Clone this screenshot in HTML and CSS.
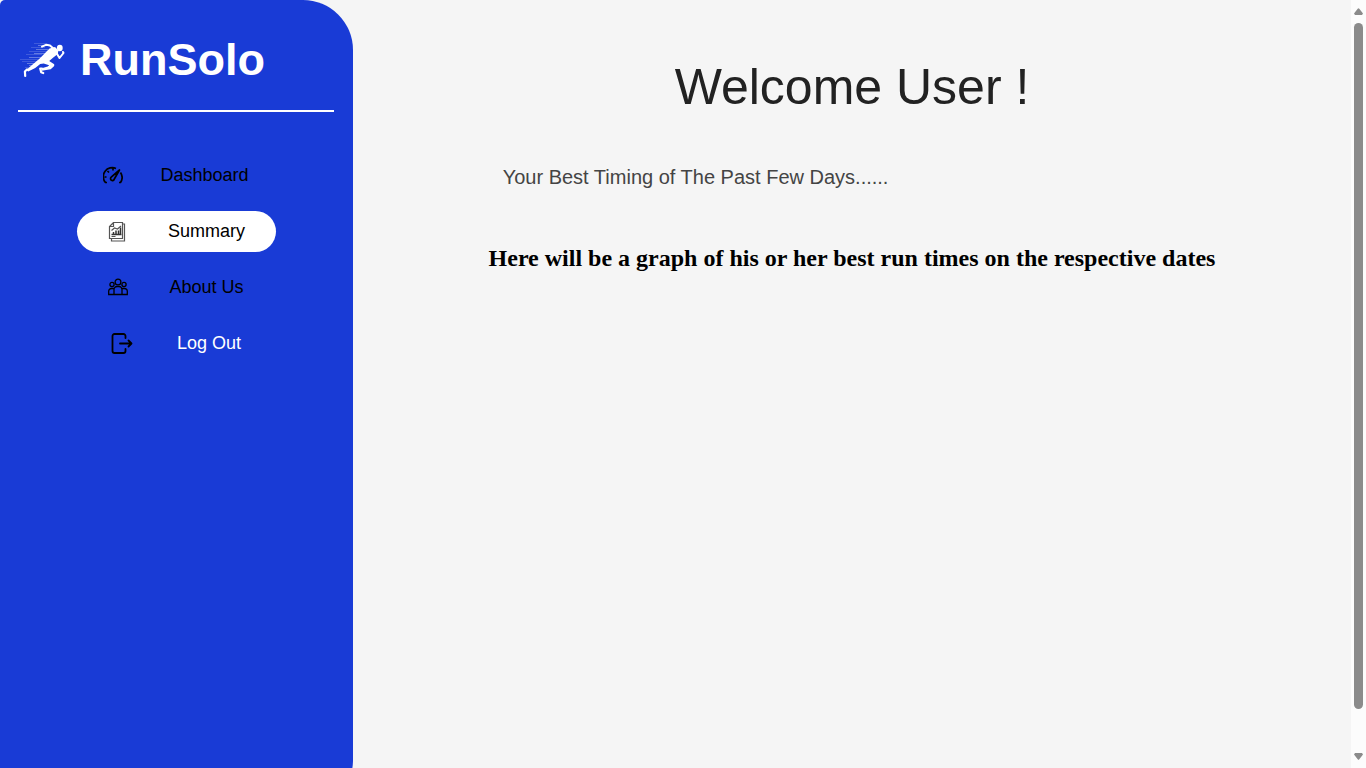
FILE: index.html
```html
<!DOCTYPE html>
<html lang="en">
<head>
<meta charset="utf-8">
<title>RunSolo - Summary</title>
<link rel="stylesheet" href="styles.css">
</head>
<body>
<div class="page">
  <aside class="sidebar">
    <div class="brand">
      <svg class="brand-logo" viewBox="0 0 48 38" aria-hidden="true">
        <g stroke="#fff" stroke-width=".8">
          <path opacity=".2" d="M14 2.500h12M11 6.500h14M9 10.500h18M6 13.500h16M0 18.500h18M2 20.500h16M5 26.500h6"/>
          <path opacity=".4" d="M18 4.500h7M16 8.500h12M14 12.500h12M9 16.500h13M7 22.500h10M9 24.500h6"/>
        </g>
        <g fill="none" stroke="#fff" stroke-linecap="round" stroke-linejoin="round">
          <path d="M34 8l-4-3.500-3.500-.8-4.500 2" stroke-width="2"/>
          <path d="M36.500 12l3 5 4-5-.5-1" stroke-width="2"/>
          <path d="M22 27.500h-1.800l1 3.800 2 .8" stroke-width="2.200"/>
          <path d="M7 28.500l-2.100 2 .3 4.500" stroke-width="2.200"/>
        </g>
        <path d="M29.500 7.500l5.500-1.500 3.500 3.500-.8 3.500-5 4-3.500 3 5 3.200v1.800l-3.500 3.300-9 1.500v-2.500l6-1.800 1.500-1.300-5.500-1.800-3.500.5-5 4-7 3.500-2-1.500 7-6 6.500-5.500z" fill="#fff"/>
        <ellipse cx="39.800" cy="7" rx="2.900" ry="3.200" fill="#fff"/>
      </svg>
      <span class="brand-name">RunSolo</span>
    </div>
    <nav class="menu">
      <a class="menu-link" href="#dashboard">
        <svg class="icon" viewBox="0 0 20 20" aria-hidden="true">
          <path d="M4 16.500H2.500A9 9 0 0 1 13 2.400M17.500 6.500a9 9 0 0 1 0 10H16M10 2v2.500M4.500 5l1.500 1.500M1.500 11H3.500" fill="none" stroke="currentColor" stroke-width="1.700"/>
          <path d="M8.200 11.200L16.500 4l-5.200 9a1.900 1.900 0 1 1-3.100-1.800z" fill="none" stroke="currentColor" stroke-width="1.700" stroke-linejoin="round"/>
        </svg>
        <span>Dashboard</span>
      </a>
      <a class="menu-link menu-link-medium menu-link-active" href="#summary" aria-current="page">
        <svg class="icon" viewBox="0 0 20 20" aria-hidden="true">
          <path d="M6.500.5h9v16H2.500V4.500zM6.500.5v4h-4M15.500 2h2v17H4.500v-2" fill="none" stroke="#555" stroke-width="1.200"/>
          <path d="M4.500 12.500h10M6.500 12v-2M9 12V8.500M11.500 12V8.500M13.500 12V5.500" fill="none" stroke="#333" stroke-width="1.500"/>
          <path d="M4.500 8.500l3-2.500 3 1 3.500-3M4.500 14.500h4" fill="none" stroke="#555" stroke-width="1.200"/>
        </svg>
        <span>Summary</span>
      </a>
      <a class="menu-link menu-link-medium" href="#about">
        <svg class="icon" viewBox="0 0 20 20" aria-hidden="true">
          <g fill="none" stroke="currentColor" stroke-width="1.300">
            <circle cx="10" cy="4" r="2.900"/>
            <circle cx="4" cy="6.500" r="2.100"/>
            <circle cx="16" cy="6.500" r="2.100"/>
            <path d="M6 16.500V11.500a3 3 0 0 1 3-3h2a3 3 0 0 1 3 3v5M6 10.500H3.500A2.800 2.800 0 0 0 .7 13.300v3.200h18.600v-3.200A2.800 2.800 0 0 0 16.500 10.500H14"/>
          </g>
        </svg>
        <span>About Us</span>
      </a>
      <a class="menu-link menu-link-wide menu-link-light" href="#logout">
        <svg class="icon icon-logout" viewBox="0 0 22 22" aria-hidden="true">
          <path d="M14.500 5V3a2 2 0 0 0-2-2H3.500A2 2 0 0 0 1.500 3v15A2 2 0 0 0 3.500 20h9a2 2 0 0 0 2-2v-2M9 10.500h11M17.500 7.500l3 3-3 3" fill="none" stroke="#000" stroke-width="1.800" stroke-linecap="round" stroke-linejoin="round"/>
        </svg>
        <span>Log Out</span>
      </a>
    </nav>
  </aside>
  <main class="content">
    <h1 class="welcome">Welcome User !</h1>
    <p class="subtitle">Your Best Timing of The Past Few Days......</p>
    <h2 class="graph-note">Here will be a graph of his or her best run times on the respective dates</h2>
  </main>
  <div class="scrollbar" aria-hidden="true">
    <svg class="scroll-arrow" viewBox="0 0 9 7"><path d="M3.700.7a1 1 0 0 1 1.600 0L9 5.500 8 7H1L0 5.500z"/></svg>
    <div class="scroll-track"><div class="scroll-thumb"></div></div>
    <svg class="scroll-arrow" viewBox="0 0 9 7"><path d="M3.700 6.300a1 1 0 0 0 1.600 0L9 1.500 8 0H1L0 1.500z"/></svg>
  </div>
</div>
</body>
</html>
```
FILE: styles.css
```css
* {
  box-sizing: border-box;
}

body {
  margin: 0;
  background: #f5f5f5;
  font-family: "Liberation Sans", Arial, sans-serif;
}

.page {
  display: flex;
  height: 100vh;
  overflow: hidden;
}

/* The sidebar runs on below the fold, where its lower corner curves. */
.sidebar {
  flex: 0 0 353px;
  height: calc(100vh + 42px);
  padding: 0 19px 0 18px;
  background: #193bd6;
  border-radius: 5px 50px 50px 5px;
}

.brand {
  display: flex;
  align-items: center;
  gap: 12px;
  height: 112px;
  padding-bottom: 8px;
  padding-top: 18px;
  border-bottom: 2px solid #fff;
}

.brand-logo {
  width: 48px;
  height: 38px;
  margin-left: 2px;
}

.brand-name {
  color: #fff;
  font-size: 45px;
  font-weight: bold;
  line-height: 50px;
}

.menu {
  display: flex;
  flex-direction: column;
  align-items: center;
  gap: 15px;
  padding-top: 43px;
}

.menu-link {
  display: flex;
  align-items: center;
  justify-content: center;
  gap: 37px;
  width: 199px;
  height: 41px;
  border-radius: 21px;
  color: #000;
  font-size: 18px;
  line-height: 21px;
  text-decoration: none;
}

.menu-link-medium {
  gap: 41px;
}

.menu-link-wide {
  gap: 44px;
}

.menu-link-active {
  background: #fff;
}

.menu-link-light {
  color: #fff;
}

.icon {
  flex: none;
  width: 20px;
  height: 20px;
}

.icon-logout {
  width: 22px;
  height: 22px;
}

.content {
  flex: 1;
  min-width: 0;
}

.welcome {
  margin: 58px 0 0;
  color: #222;
  font-size: 50px;
  font-weight: normal;
  line-height: 58px;
  text-align: center;
}

.subtitle {
  margin: 50px 0 0;
  padding-left: 15%;
  color: #444;
  font-size: 20px;
  line-height: 23px;
}

.graph-note {
  margin: 55px 0 0;
  font-family: "Liberation Serif", "Times New Roman", serif;
  font-size: 24px;
  line-height: 28px;
  text-align: center;
}

.scrollbar {
  display: flex;
  flex: 0 0 15px;
  flex-direction: column;
  align-items: center;
  padding: 8px 0;
  background: #fcfcfc;
}

.scroll-arrow {
  flex: none;
  width: 9px;
  height: 7px;
  fill: #8b8b8b;
}

.scroll-track {
  flex: 1;
  width: 9px;
  margin: 8px 0;
}

.scroll-thumb {
  height: 95%;
  border-radius: 5px;
  background: #8b8b8b;
}
```
